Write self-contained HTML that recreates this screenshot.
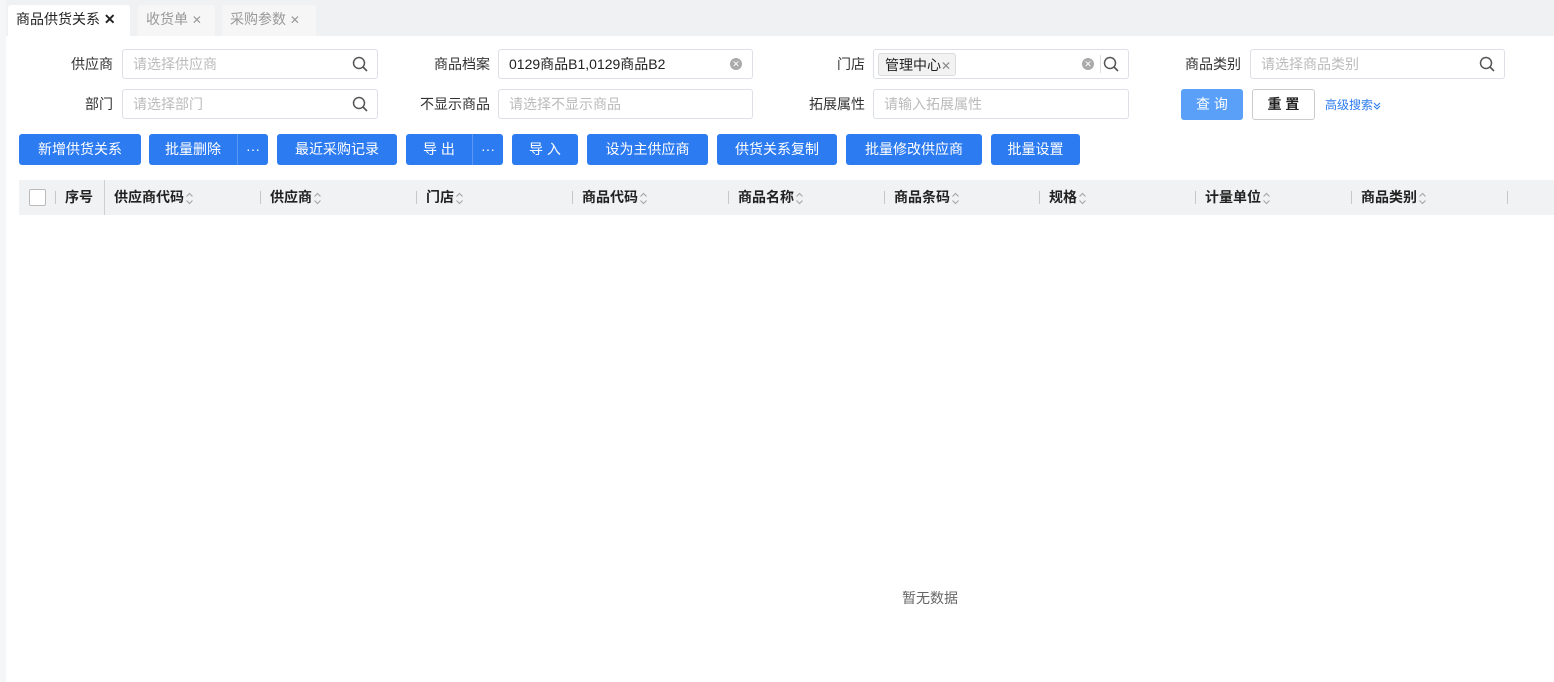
<!DOCTYPE html>
<html><head><meta charset="utf-8"><style>
*{box-sizing:border-box;margin:0;padding:0}
body{width:1554px;height:682px;background:#fff;font-family:"Liberation Sans","Noto Sans CJK SC",sans-serif;font-size:14px;color:#222;position:relative;overflow:hidden}
.strip{position:absolute;left:0;top:0;width:1554px;height:36px;background:#f0f1f3}
.lstrip{position:absolute;left:0;top:0;width:6px;height:682px;background:#f5f6f7}
.tab{position:absolute;top:5px;height:31px;line-height:29px;padding:0 8px;font-size:14px;border-radius:3px 3px 0 0}
.lbl{position:absolute;text-align:right;width:100px;line-height:30px;font-size:14px;color:#333}
.inp{position:absolute;height:30px;border:1px solid #dcdfe6;border-radius:3px;line-height:28px;padding-left:10px;font-size:14px;color:#bbb;background:#fff}
.srch{position:absolute;right:8px;top:6px}
.btn{position:absolute;top:134px;height:31px;background:#2d7bf0;color:#fff;border-radius:3px;line-height:31px;text-align:center;font-size:14px}
.split{position:absolute;top:0;bottom:0;border-left:1px solid #5a98f3}
.th{position:absolute;top:180px;height:35px;line-height:35px;font-weight:bold;font-size:14px;color:#222}
.dv{position:absolute;top:191px;width:1px;height:13px;background:#c8c8c8}
.ar{display:inline-block;vertical-align:middle;margin-left:1px}
</style></head><body>
<div class="strip"></div><div class="lstrip"></div>
<div class="tab" style="left:8px;width:122px;background:#fff;color:#222">商品供货关系 <b>✕</b></div>
<div class="tab" style="left:138px;width:77px;background:#f6f6f7;color:#999">收货单 <span style="font-size:12px">✕</span></div>
<div class="tab" style="left:222px;width:94px;background:#f6f6f7;color:#999">采购参数 <span style="font-size:12px">✕</span></div>

<svg width="0" height="0" style="position:absolute"><defs>
<g id="mg"><circle cx="7" cy="7" r="5.5" fill="none" stroke="#555" stroke-width="1.5"/><line x1="11" y1="11" x2="15" y2="15" stroke="#555" stroke-width="1.6"/></g>
<g id="so"><path d="M1.5 5.5L4.5 2.5L7.5 5.5M1.5 9.5L4.5 12.5L7.5 9.5" fill="none" stroke="#aaa" stroke-width="1.2"/></g>
</defs></svg>

<div class="lbl" style="left:13px;top:49px">供应商</div>
<div class="inp" style="left:122px;top:49px;width:256px">请选择供应商<svg class="srch" width="17" height="17"><use href="#mg"/></svg></div>
<div class="lbl" style="left:13px;top:89px">部门</div>
<div class="inp" style="left:122px;top:89px;width:256px">请选择部门<svg class="srch" width="17" height="17"><use href="#mg"/></svg></div>

<div class="lbl" style="left:390px;top:49px">商品档案</div>
<div class="inp" style="left:498px;top:49px;width:255px;color:#222">0129商品B1,0129商品B2<span style="position:absolute;right:10px;top:8px;width:12px;height:12px;border-radius:6px;background:#aaa;color:#fff;font-size:9px;line-height:12px;text-align:center">✕</span></div>
<div class="lbl" style="left:390px;top:89px">不显示商品</div>
<div class="inp" style="left:498px;top:89px;width:255px">请选择不显示商品</div>

<div class="lbl" style="left:765px;top:49px">门店</div>
<div class="inp" style="left:873px;top:49px;width:256px;padding-left:4px"><span style="display:inline-block;margin-top:3px;height:23px;line-height:22px;padding:0 4px 0 6px;background:#f2f2f3;border:1px solid #dcdcdc;border-radius:3px;color:#222">管理中心<span style="color:#888;font-size:12px">✕</span></span><span style="position:absolute;right:34px;top:8px;width:12px;height:12px;border-radius:6px;background:#aaa;color:#fff;font-size:9px;line-height:12px;text-align:center">✕</span><span style="position:absolute;right:27px;top:5px;height:18px;border-left:1px solid #ddd"></span><svg class="srch" width="17" height="17"><use href="#mg"/></svg></div>
<div class="lbl" style="left:765px;top:89px">拓展属性</div>
<div class="inp" style="left:873px;top:89px;width:256px">请输入拓展属性</div>

<div class="lbl" style="left:1141px;top:49px">商品类别</div>
<div class="inp" style="left:1250px;top:49px;width:255px">请选择商品类别<svg class="srch" width="17" height="17"><use href="#mg"/></svg></div>

<div style="position:absolute;left:1181px;top:89px;width:62px;height:31px;background:#5aa0f8;color:#fff;border-radius:3px;text-align:center;line-height:31px">查 询</div>
<div style="position:absolute;left:1252px;top:89px;width:63px;height:31px;border:1px solid #ccc;border-radius:3px;text-align:center;line-height:29px;font-weight:bold">重 置</div>
<div style="position:absolute;left:1325px;top:96px;font-size:12px;color:#2d7bf0">高级搜索<svg width="8" height="10" style="vertical-align:middle"><path d="M1 2L4 5L7 2M1 5L4 8L7 5" fill="none" stroke="#2d7bf0" stroke-width="1.1"/></svg></div>

<div class="btn" style="left:19px;width:122px">新增供货关系</div>
<div class="btn" style="left:149px;width:119px"><span style="position:absolute;left:0;width:88px">批量删除</span><div class="split" style="left:88px"></div><span style="position:absolute;left:89px;width:30px">···</span></div>
<div class="btn" style="left:277px;width:120px">最近采购记录</div>
<div class="btn" style="left:406px;width:97px"><span style="position:absolute;left:0;width:66px">导 出</span><div class="split" style="left:66px"></div><span style="position:absolute;left:67px;width:30px">···</span></div>
<div class="btn" style="left:512px;width:66px">导 入</div>
<div class="btn" style="left:587px;width:121px">设为主供应商</div>
<div class="btn" style="left:717px;width:120px">供货关系复制</div>
<div class="btn" style="left:846px;width:136px">批量修改供应商</div>
<div class="btn" style="left:991px;width:89px">批量设置</div>

<div style="position:absolute;left:19px;top:180px;width:1535px;height:35px;background:#f1f2f4"></div>
<div style="position:absolute;left:29px;top:189px;width:17px;height:17px;border:1px solid #bbb;border-radius:2px;background:#fff"></div>
<div class="dv" style="left:55px"></div>
<div class="th" style="left:65px">序号</div>
<div style="position:absolute;left:104px;top:180px;width:1px;height:35px;background:#d0d0d0"></div>
<div class="th" style="left:114px">供应商代码<svg class="ar" width="9" height="15"><use href="#so"/></svg></div>
<div class="dv" style="left:260px"></div><div class="th" style="left:270px">供应商<svg class="ar" width="9" height="15"><use href="#so"/></svg></div>
<div class="dv" style="left:416px"></div><div class="th" style="left:426px">门店<svg class="ar" width="9" height="15"><use href="#so"/></svg></div>
<div class="dv" style="left:572px"></div><div class="th" style="left:582px">商品代码<svg class="ar" width="9" height="15"><use href="#so"/></svg></div>
<div class="dv" style="left:728px"></div><div class="th" style="left:738px">商品名称<svg class="ar" width="9" height="15"><use href="#so"/></svg></div>
<div class="dv" style="left:884px"></div><div class="th" style="left:894px">商品条码<svg class="ar" width="9" height="15"><use href="#so"/></svg></div>
<div class="dv" style="left:1039px"></div><div class="th" style="left:1049px">规格<svg class="ar" width="9" height="15"><use href="#so"/></svg></div>
<div class="dv" style="left:1195px"></div><div class="th" style="left:1205px">计量单位<svg class="ar" width="9" height="15"><use href="#so"/></svg></div>
<div class="dv" style="left:1351px"></div><div class="th" style="left:1361px">商品类别<svg class="ar" width="9" height="15"><use href="#so"/></svg></div>
<div class="dv" style="left:1507px"></div>

<div style="position:absolute;left:902px;top:588px;color:#666;font-size:14px">暂无数据</div>
</body></html>
